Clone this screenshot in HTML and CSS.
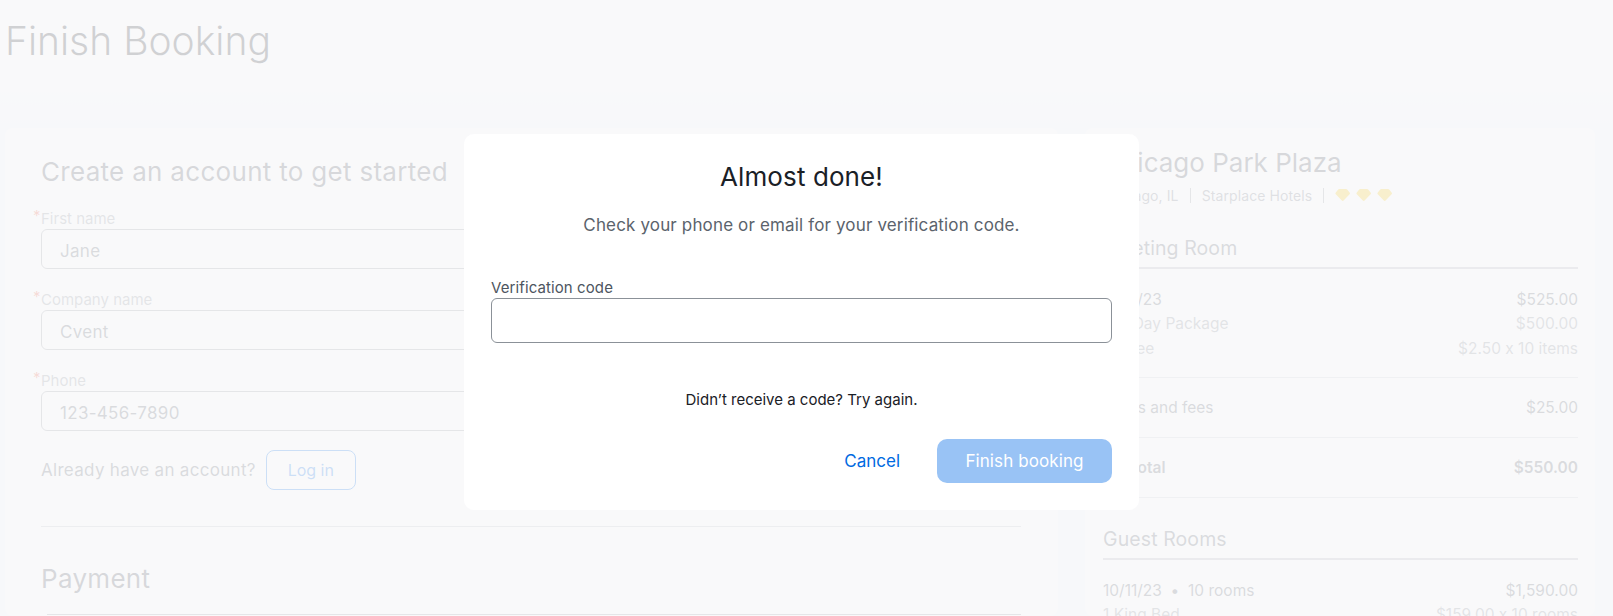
FILE: index.html
```html
<!DOCTYPE html>
<html lang="en">
<head>
    <meta charset="UTF-8">
    <meta name="viewport" content="width=device-width, initial-scale=1.0">
    <title>Finish Booking</title>
    <link rel="stylesheet" href="styles.css">
</head>
<body>
    <header class="page-header">
        <h1>Finish Booking</h1>
    </header>

    <main class="booking-layout">
        <section class="card account-card">
            <h2 class="section-title">Create an account to get started</h2>

            <div class="field">
                <label class="required">First name</label>
                <div class="text-input">Jane</div>
            </div>
            <div class="field">
                <label class="required">Company name</label>
                <div class="text-input">Cvent</div>
            </div>
            <div class="field">
                <label class="required">Phone</label>
                <div class="text-input">123-456-7890</div>
            </div>

            <div class="login-row">
                <span>Already have an account?</span>
                <button class="login-button">Log in</button>
            </div>

            <hr class="divider">

            <h2 class="section-title payment-title">Payment</h2>
            <div class="payment-rule"></div>
        </section>

        <aside class="card summary-card">
            <h2 class="hotel-name">Chicago Park Plaza</h2>
            <div class="hotel-meta">
                <span>Chicago, IL</span>
                <span class="meta-sep"></span>
                <span>Starplace Hotels</span>
                <span class="meta-sep"></span>
                <span class="gems">
                    <svg viewBox="0 0 15 12" width="15" height="12"><path d="M4 0h7c.5 0 .9 .2 1.200 .6l2.400 2.900c.5 .6 .5 1.300 0 1.800l-6 6.200c-.5 .6 -1.300 .6 -1.800 0l-6 -6.200c-.5 -.5 -.5 -1.200 0 -1.800l2.400 -2.900c.3 -.4 .7 -.6 1.200 -.6z"/></svg>
                    <svg viewBox="0 0 15 12" width="15" height="12"><path d="M4 0h7c.5 0 .9 .2 1.200 .6l2.400 2.900c.5 .6 .5 1.300 0 1.800l-6 6.200c-.5 .6 -1.300 .6 -1.800 0l-6 -6.200c-.5 -.5 -.5 -1.200 0 -1.800l2.400 -2.900c.3 -.4 .7 -.6 1.200 -.6z"/></svg>
                    <svg viewBox="0 0 15 12" width="15" height="12"><path d="M4 0h7c.5 0 .9 .2 1.200 .6l2.400 2.900c.5 .6 .5 1.300 0 1.800l-6 6.200c-.5 .6 -1.300 .6 -1.800 0l-6 -6.200c-.5 -.5 -.5 -1.200 0 -1.800l2.400 -2.900c.3 -.4 .7 -.6 1.200 -.6z"/></svg>
                </span>
            </div>

            <h3 class="summary-heading">Meeting Room</h3>
            <div class="summary-group">
                <div class="line-item"><span>10/11/23</span><span>$525.00</span></div>
                <div class="line-item muted"><span>Full Day Package</span><span>$500.00</span></div>
                <div class="line-item muted"><span>AV Fee</span><span>$2.50 x 10 items</span></div>
            </div>
            <div class="summary-group single">
                <div class="line-item"><span>Taxes and fees</span><span>$25.00</span></div>
            </div>
            <div class="summary-group single">
                <div class="line-item total"><span>Subtotal</span><span>$550.00</span></div>
            </div>

            <h3 class="summary-heading guest-heading">Guest Rooms</h3>
            <div class="summary-group last">
                <div class="line-item"><span>10/11/23 &nbsp;•&nbsp; 10 rooms</span><span>$1,590.00</span></div>
                <div class="line-item muted"><span>1 King Bed</span><span>$159.00 x 10 rooms</span></div>
            </div>
        </aside>
    </main>

    <div class="overlay">
        <div class="modal">
            <h2 class="modal-title">Almost done!</h2>
            <p class="modal-text">Check your phone or email for your verification code.</p>
            <label class="modal-label" for="code">Verification code</label>
            <input class="modal-input" id="code" type="text">
            <p class="modal-resend">Didn’t receive a code? Try again.</p>
            <div class="modal-actions">
                <a class="cancel-link" href="#">Cancel</a>
                <button class="finish-button">Finish booking</button>
            </div>
        </div>
    </div>
</body>
</html>
```

FILE: styles.css
```css
/* Page */
html, body {
    height: 616px;
    overflow: hidden;
}

body {
    margin: 0;
    font-family: 'Inter', 'Roboto', sans-serif;
    font-feature-settings: "calt" 0;
    background-color: #eef2f9;
    color: #1a2026;
}

.page-header {
    height: 128px;
    padding-left: 5px;
    box-sizing: border-box;
    background: linear-gradient(#f9f9fa 60%, #eef2f9);
}

.page-header h1 {
    margin: 0;
    padding-top: 17px;
    font-size: 39px;
    line-height: 48px;
    font-weight: 300;
}

.booking-layout {
    display: grid;
    grid-template-columns: 1053px 510px;
    column-gap: 27px;
    padding-left: 5px;
}

.card {
    background-color: #f9f9fa;
    border-radius: 8px;
    height: 488px;
    overflow: hidden;
    box-sizing: border-box;
}

/* Account form */
.account-card {
    padding: 28px 37px 0 36px;
}

.section-title {
    margin: 0;
    font-size: 26px;
    line-height: 32px;
    font-weight: 400;
    letter-spacing: 0.3px;
    color: #3f4650;
}

.field {
    margin-top: 21px;
}

.field label {
    display: block;
    position: relative;
    height: 20px;
    font-size: 15px;
    line-height: 20px;
    color: #858b93;
}

.required::before {
    content: "*";
    position: absolute;
    left: -8px;
    top: -3px;
    color: #e8553a;
}

.text-input {
    height: 40px;
    box-sizing: border-box;
    padding-left: 18px;
    border: 1px solid #8b9198;
    border-radius: 6px;
    font-size: 17px;
    letter-spacing: 0.3px;
    line-height: 42px;
    color: #4d5560;
}

.login-row {
    display: flex;
    align-items: center;
    gap: 10px;
    margin-top: 19px;
    font-size: 17px;
    letter-spacing: 0.3px;
    color: #4d5560;
}

.login-button {
    width: 90px;
    height: 40px;
    padding: 0;
    background: none;
    border: 1px solid #006ae1;
    border-radius: 8px;
    font-family: inherit;
    font-size: 16px;
    color: #006ae1;
}

.divider {
    margin: 36px 0 0;
    border: 0;
    border-top: 1px solid #b9bdc2;
}

.payment-title {
    margin-top: 36px;
}

.payment-rule {
    margin: 19px 0 0 6px;
    border-top: 1px solid #8b9198;
}

/* Summary */
.summary-card {
    padding: 18px 17px 0 18px;
}

.hotel-name {
    margin: 0;
    font-size: 26px;
    line-height: 34px;
    font-weight: 400;
    color: #3f4650;
}

.hotel-meta {
    display: flex;
    align-items: center;
    gap: 11px;
    height: 24px;
    margin-top: 3px;
    font-size: 14px;
    letter-spacing: 0.1px;
    color: #69717a;
}

.meta-sep {
    width: 1px;
    height: 15px;
    background-color: #8b9198;
}

.gems {
    display: flex;
    gap: 6px;
}

.gems svg {
    fill: #f2c200;
}

.summary-heading {
    margin: 28px 0 0;
    padding-bottom: 6px;
    border-bottom: 2px solid #a9aeb4;
    font-size: 19.500px;
    line-height: 26px;
    font-weight: 400;
    letter-spacing: 0.1px;
    color: #4d5560;
}

.summary-group {
    padding: 18.500px 0 15px;
    border-bottom: 1px solid #c9ccd0;
}

.summary-group.single {
    padding: 18px 0 16.500px;
}

.summary-group.last {
    border-bottom: 0;
}

.guest-heading {
    margin-top: 28px;
}

.line-item {
    display: flex;
    justify-content: space-between;
    font-size: 15.500px;
    line-height: 24.700px;
    color: #4d5560;
}

.line-item.muted {
    color: #7d848c;
}

.line-item.total {
    font-weight: 600;
}

/* Verification dialog */
.overlay {
    position: fixed;
    top: 0;
    left: 0;
    right: 0;
    bottom: 0;
    background-color: rgba(249, 249, 250, 0.82);
    padding: 134px 0 0 464px;
}

.modal {
    width: 675px;
    height: 376px;
    padding: 27px 27px 0;
    box-sizing: border-box;
    background-color: #fff;
    border-radius: 10px;
}

.modal-title {
    margin: 0;
    text-align: center;
    font-size: 26px;
    line-height: 32px;
    font-weight: 400;
    letter-spacing: 0.1px;
    color: #1a2026;
}

.modal-text {
    margin: 20px 0 0;
    text-align: center;
    font-size: 17px;
    letter-spacing: 0.15px;
    line-height: 24px;
    color: #5b636c;
}

.modal-label {
    display: block;
    margin-top: 41px;
    font-size: 15px;
    letter-spacing: 0.1px;
    line-height: 20px;
    color: #4d5560;
}

.modal-input {
    display: block;
    width: 100%;
    height: 45px;
    margin: 0;
    box-sizing: border-box;
    border: 1px solid #8b9198;
    border-radius: 6px;
    background: #fff;
}

.modal-resend {
    margin: 47px 0 0;
    text-align: center;
    font-size: 15px;
    line-height: 20px;
    color: #1a2026;
}

.modal-actions {
    display: flex;
    justify-content: flex-end;
    align-items: center;
    gap: 37px;
    margin-top: 29px;
}

.cancel-link {
    font-size: 17px;
    color: #006ae1;
    text-decoration: none;
}

.finish-button {
    width: 175px;
    height: 44px;
    padding: 0;
    border: 0;
    border-radius: 10px;
    background-color: #99c3f5;
    font-family: inherit;
    font-size: 17px;
    letter-spacing: 0.1px;
    color: #fff;
}
```
